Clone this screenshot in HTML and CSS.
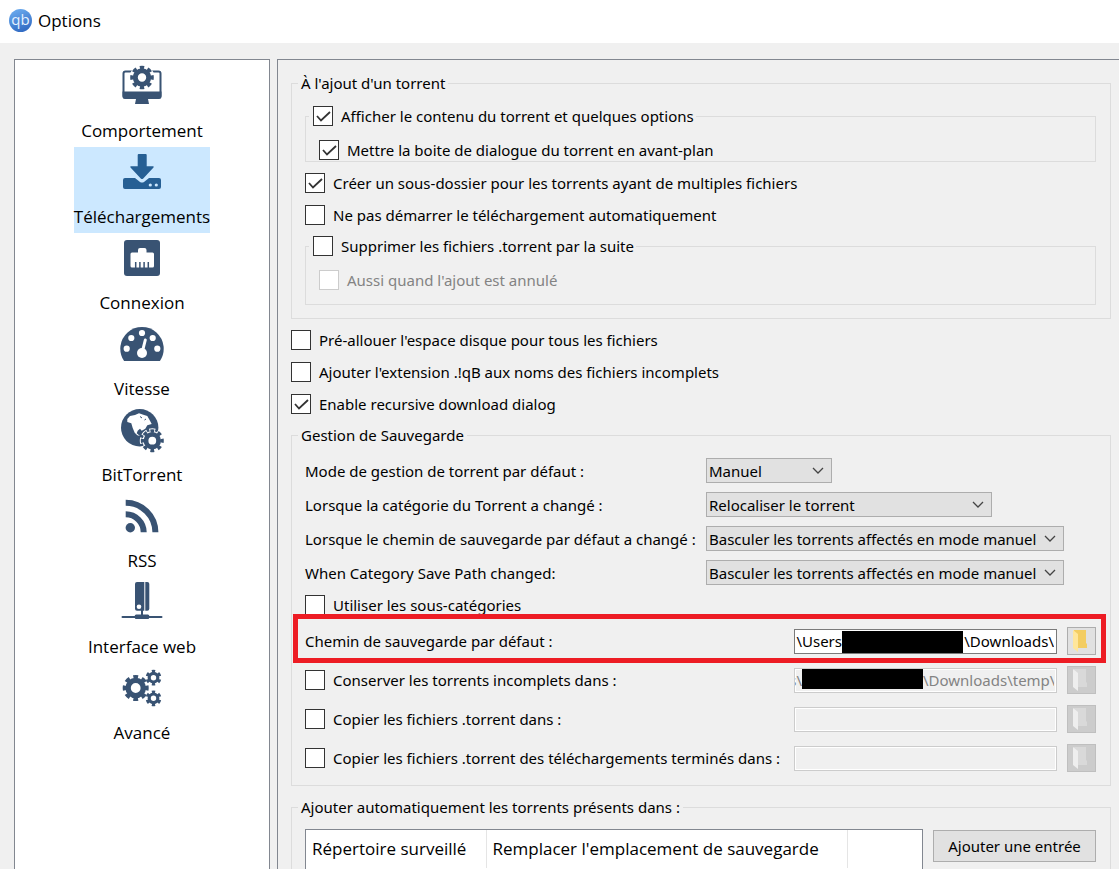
FILE: index.html
```html
<!DOCTYPE html>
<html lang="fr">
<head>
  <meta charset="UTF-8" />
  <meta name="viewport" content="width=device-width, initial-scale=1.0"/>
  <title>Options</title>
  <link rel="stylesheet" href="styles.css">
</head>
<body>
  <header class="titlebar">
    <span class="logo">qb</span>
    <h1>Options</h1>
  </header>

  <div class="window">
    <!-- Left menu -->
    <nav class="sidebar">
      <a href="#comportement" class="tab">
        <svg viewBox="0 0 48 56" class="icon">
          <rect x="5.5" y="10.5" width="37" height="26" rx="2" fill="none" stroke="currentColor" stroke-width="2"/>
          <path d="M4.5 30.5h39v5a2.5 2.5 0 0 1-2.5 2.5H30l1 5H17l1-5H7a2.5 2.5 0 0 1-2.5-2.5z" fill="currentColor"/>
          <circle cx="24" cy="16.5" r="12.5" fill="#fff"/>
          <circle cx="24" cy="16.5" r="6.7" fill="none" stroke="currentColor" stroke-width="5"/>
          <circle cx="24" cy="16.5" r="10" fill="none" stroke="currentColor" stroke-width="3.6" pathLength="16" stroke-dasharray="1.1 0.9" stroke-dashoffset="0.55"/>
        </svg>
        Comportement
      </a>
      <a href="#telechargements" class="tab active">
        <svg viewBox="0 0 48 56" class="icon">
          <path d="M7 31h10l5 4q2 1 4 0l5-4h10a2 2 0 0 1 2 2v7a2 2 0 0 1-2 2H7a2 2 0 0 1-2-2v-7a2 2 0 0 1 2-2z" fill="currentColor"/>
          <path d="M19.7 8q0-1 1-1h7q1 0 1 1v11.3h6.5q1 0.3 0.3 1.2L25 31.7q-1 0.8-2 0L12.500 20.5q-0.7-0.9 0.3-1.2h6.9z" fill="currentColor"/>
          <circle cx="32.3" cy="38" r="1.6" fill="#cce8ff"/>
          <circle cx="38.3" cy="38" r="1.6" fill="#cce8ff"/>
        </svg>
        Téléchargements
      </a>
      <a href="#connexion" class="tab">
        <svg viewBox="0 0 48 56" class="icon">
          <rect x="6" y="7" width="36" height="36" rx="3" fill="currentColor"/>
          <path d="M14 19.5h6V17q0-2 2-2h4.5q2 0 2 2v2.5h6q1.5 0 1.5 1.5v12q0 1.5-1.5 1.5h-20.5q-1.5 0-1.500-1.5V21q0-1.5 1.5-1.5z" fill="#fff"/>
          <path d="M17.7 29v6M21.9 29v6M26.1 29v6M30.3 29v6" stroke="currentColor" stroke-width="1.5"/>
        </svg>
        Connexion
      </a>
      <a href="#vitesse" class="tab">
        <svg viewBox="0 0 48 56" class="icon">
          <path d="M6.1 42A21.7 21.7 0 1 1 41.9 42z" fill="currentColor"/>
          <g fill="#fff">
            <circle cx="8.7" cy="29.7" r="3.1"/>
            <circle cx="13.3" cy="19" r="3.1"/>
            <circle cx="24" cy="14" r="3.1"/>
            <circle cx="34.7" cy="19" r="3.1"/>
            <circle cx="39.3" cy="29.7" r="3.1"/>
            <circle cx="24" cy="34" r="5"/>
          </g>
          <path d="M24 34L27.3 21" stroke="#fff" stroke-width="3" stroke-linecap="round"/>
        </svg>
        Vitesse
      </a>
      <a href="#bittorrent" class="tab">
        <svg viewBox="0 0 48 56" class="icon">
          <circle cx="21.7" cy="22.7" r="18.7" fill="currentColor"/>
          <path d="M9.3 14L12 11l5-1 4-1.7 4.3 1.4 4 1.3 2.7 4.7 1.7 3.3-4.4 1.3-2 3.4-3.6 2-1.7-2-2.3 2-1 2.6L22 31l-2.7-.7-2.6-2.6L14.700 23l-1.4-4.7L9.3 17z" fill="#fff"/>
          <path d="M22 11.5l2 1.5M28 14l-1.5 1" stroke="currentColor"/>
          <circle cx="34.3" cy="35.7" r="9.8" fill="#fff"/>
          <circle cx="34.3" cy="35.7" r="10.5" fill="none" stroke="#fff" stroke-width="4" pathLength="16" stroke-dasharray="1.4 0.6" stroke-dashoffset="0.7"/>
          <circle cx="34.3" cy="35.7" r="6.3" fill="none" stroke="currentColor" stroke-width="4.8"/>
          <circle cx="34.3" cy="35.7" r="9.8" fill="none" stroke="currentColor" stroke-width="3.4" pathLength="16" stroke-dasharray="1 1" stroke-dashoffset="0.5"/>
        </svg>
        BitTorrent
      </a>
      <a href="#rss" class="tab">
        <svg viewBox="0 0 48 56" class="icon">
          <circle cx="12.3" cy="36.7" r="4.7" fill="currentColor"/>
          <path d="M7.7 11.8a29.7 29.7 0 0 1 29.7 29.5M7.7 23.3a18 18 0 0 1 18 18" fill="none" stroke="currentColor" stroke-width="6"/>
        </svg>
        RSS
      </a>
      <a href="#web" class="tab">
        <svg viewBox="0 0 48 56" class="icon">
          <rect x="17" y="5" width="14.3" height="28.7" rx="2" fill="currentColor"/>
          <path d="M26.8 5v29" stroke="#fff"/>
          <circle cx="21" cy="29.7" r="2.3" fill="#fff"/>
          <path d="M24 33v6" stroke="currentColor" stroke-width="2"/>
          <path d="M4.5 40h39" stroke="currentColor" stroke-width="2" stroke-linecap="round"/>
          <rect x="16.7" y="37.5" width="14.6" height="4.5" rx="1.5" fill="currentColor"/>
        </svg>
        Interface web
      </a>
      <a href="#avance" class="tab">
        <svg viewBox="0 0 48 56" class="icon">
          <g fill="none" stroke="currentColor">
            <circle cx="17.7" cy="25" r="7.6" stroke-width="5.4"/>
            <circle cx="17.7" cy="25" r="11.2" stroke-width="3.6" pathLength="16" stroke-dasharray="1.1 0.9" stroke-dashoffset="0.55"/>
            <circle cx="35.5" cy="14.7" r="4.3" stroke-width="3.2"/>
            <circle cx="35.5" cy="14.7" r="6.5" stroke-width="2.8" pathLength="12" stroke-dasharray="1 1" stroke-dashoffset="-0.5"/>
            <circle cx="35.5" cy="35.3" r="4.3" stroke-width="3.2"/>
            <circle cx="35.5" cy="35.3" r="6.5" stroke-width="2.8" pathLength="12" stroke-dasharray="1 1" stroke-dashoffset="-0.5"/>
          </g>
        </svg>
        Avancé
      </a>
    </nav>

    <!-- Downloads page -->
    <form class="panel">
      <fieldset>
        <legend>À l'ajout d'un torrent</legend>
        <fieldset class="nested tight">
          <legend><label class="check"><input type="checkbox" checked> Afficher le contenu du torrent et quelques options</label></legend>
          <label class="check"><input type="checkbox" checked> Mettre la boite de dialogue du torrent en avant-plan</label>
        </fieldset>
        <div class="check-list">
          <label class="check"><input type="checkbox" checked> Créer un sous-dossier pour les torrents ayant de multiples fichiers</label>
          <label class="check"><input type="checkbox"> Ne pas démarrer le téléchargement automatiquement</label>
        </div>
        <fieldset class="nested">
          <legend><label class="check"><input type="checkbox"> Supprimer les fichiers .torrent par la suite</label></legend>
          <label class="check"><input type="checkbox" disabled> Aussi quand l'ajout est annulé</label>
        </fieldset>
      </fieldset>

      <div class="check-list">
        <label class="check"><input type="checkbox"> Pré-allouer l'espace disque pour tous les fichiers</label>
        <label class="check"><input type="checkbox"> Ajouter l'extension .!qB aux noms des fichiers incomplets</label>
        <label class="check"><input type="checkbox" checked> Enable recursive download dialog</label>
      </div>

      <fieldset>
        <legend>Gestion de Sauvegarde</legend>
        <div class="modes">
          <label for="mode">Mode de gestion de torrent par défaut :</label>
          <select id="mode" class="small">
            <option>Manuel</option>
            <option>Automatique</option>
          </select>
          <label for="category">Lorsque la catégorie du Torrent a changé :</label>
          <select id="category" class="medium">
            <option>Relocaliser le torrent</option>
          </select>
          <label for="defaultPath">Lorsque le chemin de sauvegarde par défaut a changé :</label>
          <select id="defaultPath" class="large">
            <option>Basculer les torrents affectés en mode manuel</option>
          </select>
          <label for="categoryPath">When Category Save Path changed:</label>
          <select id="categoryPath" class="large">
            <option>Basculer les torrents affectés en mode manuel</option>
          </select>
        </div>
        <label class="check"><input type="checkbox"> Utiliser les sous-catégories</label>
        <div class="paths">
          <div class="path-row highlight">
            <label for="savePath">Chemin de sauvegarde par défaut :</label>
            <div class="path-field">
              <span>\Users</span>
              <span class="hidden-part"></span>
              <input type="text" id="savePath" value="\Downloads\">
            </div>
            <button type="button" class="browse" aria-label="Parcourir">
              <svg viewBox="0 0 16 24"><path d="M2 1h12v13l1 1v4H2z" fill="#f3cd62"/><path d="M1 1l5 4v18l-5-4z" fill="#ffe69b"/></svg>
            </button>
          </div>
          <div class="path-row">
            <label class="check"><input type="checkbox"> Conserver les torrents incomplets dans :</label>
            <div class="path-field off">
              <span>s\</span>
              <span class="hidden-part"></span>
              <input type="text" class="temp" value="\Downloads\temp\" aria-label="Dossier temporaire" disabled>
            </div>
            <button type="button" class="browse" aria-label="Parcourir" disabled>
              <svg viewBox="0 0 16 24"><path d="M2 1h12v13l1 1v4H2z" fill="#d9d9d9"/><path d="M1 1l5 4v18l-5-4z" fill="#eee"/></svg>
            </button>
          </div>
          <div class="path-row">
            <label class="check"><input type="checkbox"> Copier les fichiers .torrent dans :</label>
            <div class="path-field off"><input type="text" aria-label="Dossier de copie" disabled></div>
            <button type="button" class="browse" aria-label="Parcourir" disabled>
              <svg viewBox="0 0 16 24"><path d="M2 1h12v13l1 1v4H2z" fill="#d9d9d9"/><path d="M1 1l5 4v18l-5-4z" fill="#eee"/></svg>
            </button>
          </div>
          <div class="path-row">
            <label class="check"><input type="checkbox"> Copier les fichiers .torrent des téléchargements terminés dans :</label>
            <div class="path-field off"><input type="text" aria-label="Dossier des terminés" disabled></div>
            <button type="button" class="browse" aria-label="Parcourir" disabled>
              <svg viewBox="0 0 16 24"><path d="M2 1h12v13l1 1v4H2z" fill="#d9d9d9"/><path d="M1 1l5 4v18l-5-4z" fill="#eee"/></svg>
            </button>
          </div>
        </div>
      </fieldset>

      <fieldset>
        <legend>Ajouter automatiquement les torrents présents dans :</legend>
        <div class="watch">
          <div class="watch-list">
            <table>
              <thead>
                <tr><th class="dir">Répertoire surveillé</th><th class="dest">Remplacer l'emplacement de sauvegarde</th><th></th></tr>
              </thead>
            </table>
          </div>
          <button type="button" class="add">Ajouter une entrée</button>
        </div>
      </fieldset>
    </form>
  </div>
</body>
</html>
```
FILE: styles.css
```css
* {
  box-sizing: border-box;
}

body {
  margin: 0;
  height: 100vh;
  display: flex;
  flex-direction: column;
  overflow: hidden;
  background: #f0f0f0;
  color: #000;
  font-family: "Noto Sans", sans-serif;
  font-size: 15px;
  line-height: 20px;
}

/* Title bar */
.titlebar {
  display: flex;
  align-items: center;
  gap: 6px;
  height: 43px;
  padding: 0 9px 2px;
  background: #fff;
  flex-shrink: 0;
}

.titlebar h1 {
  margin: 0;
  font: 17px/26px "Open Sans", sans-serif;
}

.logo {
  width: 23px;
  height: 23px;
  border-radius: 50%;
  background: linear-gradient(160deg, #6fb0f2, #2a62bd);
  color: #e4f1ff;
  font: 15px/20px "Open Sans", sans-serif;
  text-align: center;
}

.window {
  flex: 1;
  min-height: 0;
  display: flex;
  gap: 7px;
  padding: 16px 0 0 14px;
}

/* Left menu */
.sidebar {
  width: 256px;
  flex-shrink: 0;
  display: flex;
  flex-direction: column;
  align-items: center;
  padding-top: 1px;
  background: #fff;
  border: 1px solid #828790;
  border-bottom: none;
}

.tab {
  display: flex;
  flex-direction: column;
  align-items: center;
  height: 86px;
  flex-shrink: 0;
  color: #000;
  font: 17px/28px "Open Sans", sans-serif;
  text-decoration: none;
}

.tab.active {
  background: #cce8ff;
}

.icon {
  width: 48px;
  height: 56px;
  color: #395373;
}

.active .icon {
  color: #265f94;
}

/* Options panel */
.panel {
  flex: 1;
  min-width: 0;
  display: flex;
  flex-direction: column;
  gap: 11px;
  padding: 13px 8px 0 13px;
  overflow: hidden;
  border: 1px solid #828790;
  border-right: none;
  border-bottom: none;
}

fieldset {
  min-width: 0;
  margin: 0;
  padding: 13px 14px 13px 13px;
  border: 1px solid #dcdcdc;
}

.panel > fieldset:last-child {
  padding-top: 12px;
}

legend {
  margin-left: -7px;
  padding: 0 3px;
  height: 20px;
}

.nested {
  margin: 11px 0 0;
  padding: 14px 13px;
}

.nested legend {
  margin-left: -10px;
  padding: 0 2px 0 4px;
}

.tight {
  margin: 0 0 11px;
  padding-bottom: 1px;
}

.check-list {
  display: flex;
  flex-direction: column;
  gap: 12px;
}

.check {
  display: flex;
  align-items: center;
  gap: 8px;
}

input[type="checkbox"] {
  appearance: none;
  width: 20px;
  height: 20px;
  margin: 0;
  flex-shrink: 0;
  background: #fff center no-repeat;
  border: 1px solid #333;
}

input[type="checkbox"]:checked {
  background-image: url("data:image/svg+xml,%3Csvg xmlns='http://www.w3.org/2000/svg' width='18' height='18'%3E%3Cpath d='M3 9l4 4.5L16 5' fill='none' stroke='%23333' stroke-width='1.8'/%3E%3C/svg%3E");
}

input[type="checkbox"]:disabled {
  border-color: #ccc;
}

.check:has(:disabled) {
  color: #838383;
}

.modes {
  display: grid;
  grid-template-columns: 401px 1fr;
  gap: 9px 0;
  align-items: center;
  margin-bottom: 10px;
}

select {
  appearance: none;
  height: 25px;
  padding: 0 26px 0 2px;
  border: 1px solid #adadad;
  border-radius: 0;
  background: #e1e1e1 url("data:image/svg+xml,%3Csvg xmlns='http://www.w3.org/2000/svg' width='12' height='8'%3E%3Cpath d='M1 1l5 5 5-5' fill='none' stroke='%23444' stroke-width='1.3'/%3E%3C/svg%3E") right 7px center no-repeat;
  color: #000;
  font: inherit;
}

.small {
  width: 126px;
}

.medium {
  width: 286px;
}

.large {
  width: 358px;
}

/* Folder rows */
.paths {
  display: flex;
  flex-direction: column;
  gap: 11px;
  margin-top: 12px;
}

.path-row {
  position: relative;
  display: flex;
  align-items: center;
  gap: 10px;
  height: 28px;
}

.path-row > label {
  flex: 1;
}

.highlight::after {
  content: "";
  position: absolute;
  inset: -13px -10px -8px -12px;
  border: 5px solid #ed1c24;
  pointer-events: none;
}

.path-field {
  display: flex;
  justify-content: flex-end;
  width: 263px;
  height: 25px;
  padding-right: 2px;
  overflow: hidden;
  background: #fff;
  border: 1px solid #7a7a7a;
  line-height: 23px;
}

.path-field.off {
  background: #f0f0f0;
  border-color: #ccc;
  box-shadow: inset 0 0 0 1px #fff;
  color: #838383;
}

.path-field input {
  width: 91px;
  flex-shrink: 0;
  padding: 0;
  border: none;
  background: none;
  color: inherit;
  font: inherit;
  text-align: right;
}

.path-field .temp {
  width: 131px;
}

.hidden-part {
  width: 121px;
  height: 20px;
  flex-shrink: 0;
  background: #000;
}

.highlight .hidden-part {
  height: 22px;
  align-self: flex-end;
}

.browse {
  display: flex;
  align-items: center;
  width: 29px;
  height: 28px;
  padding: 0 4px;
  background: #e1e1e1;
  border: 1px solid #adadad;
}

.browse svg {
  width: 16px;
  height: 24px;
}

.browse:disabled {
  background: #ccc;
  border-color: #bfbfbf;
}

/* Watched folders */
.watch {
  display: flex;
  align-items: flex-start;
  gap: 10px;
}

.watch-list {
  flex: 1;
  height: 160px;
  background: #fff;
  border: 1px solid #828790;
}

table {
  width: 100%;
  border-collapse: collapse;
  table-layout: fixed;
}

th {
  height: 38px;
  padding: 0 6px;
  border-right: 1px solid #e5e5e5;
  font: 17px/24px "Open Sans", sans-serif;
  text-align: left;
  white-space: nowrap;
}

th:last-child {
  border-right: none;
}

.dir {
  width: 180px;
}

.dest {
  width: 361px;
}

.add {
  width: 163px;
  height: 32px;
  margin-top: 1px;
  background: #e1e1e1;
  border: 1px solid #adadad;
  color: #000;
  font: inherit;
}
```
